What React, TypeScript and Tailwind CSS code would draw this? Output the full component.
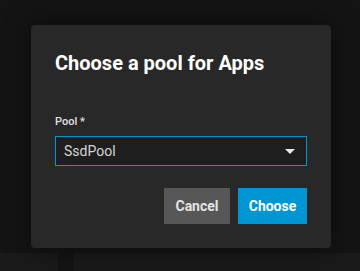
import React, { useState } from 'react';

const App: React.FC = () => {
  const [pool, setPool] = useState('SsdPool');

  return (
    <div className="relative w-[360px] h-[271px] overflow-hidden bg-[#141414] font-['Roboto',sans-serif]">
      {/* page behind the overlay */}
      <div className="absolute left-0 right-0 top-[253px] bottom-0 flex gap-4">
        <div className="w-[58px] bg-[#1a1a1a]" />
        <div className="flex-1 bg-[#1a1a1a]" />
      </div>

      <div className="absolute left-[31px] top-[25px] w-[300px] h-[223px] rounded bg-[#282828] shadow-[0_0_24px_rgba(0,0,0,0.5)] p-6 flex flex-col">
        <h2 className="text-[20px] leading-7 font-bold text-white">Choose a pool for Apps</h2>

        <div className="mt-[37px] flex flex-col">
          <label className="text-[11px] leading-4 font-medium text-[#e0e0e0]">Pool *</label>
          <div className="mt-[6px] h-[30px] border border-[#0095d5] bg-[#1e1e1e] flex items-center justify-between pl-2 pr-[11px]">
            <span className="text-[14px] text-[#d4d4d4]">{pool}</span>
            <svg width="10" height="5" viewBox="0 0 10 5">
              <path d="M0 0h10L5 5z" fill="#e8e8e8" />
            </svg>
          </div>
        </div>

        <div className="mt-auto flex justify-end gap-2">
          <button onClick={() => setPool('SsdPool')} className="h-9 w-[66px] bg-[#575757] text-[14px] font-bold text-[#e4e4e4]">
            Cancel
          </button>
          <button className="h-9 w-[69px] bg-[#0095d5] text-[14px] font-bold text-white">
            Choose
          </button>
        </div>
      </div>
    </div>
  );
};

export default App;
